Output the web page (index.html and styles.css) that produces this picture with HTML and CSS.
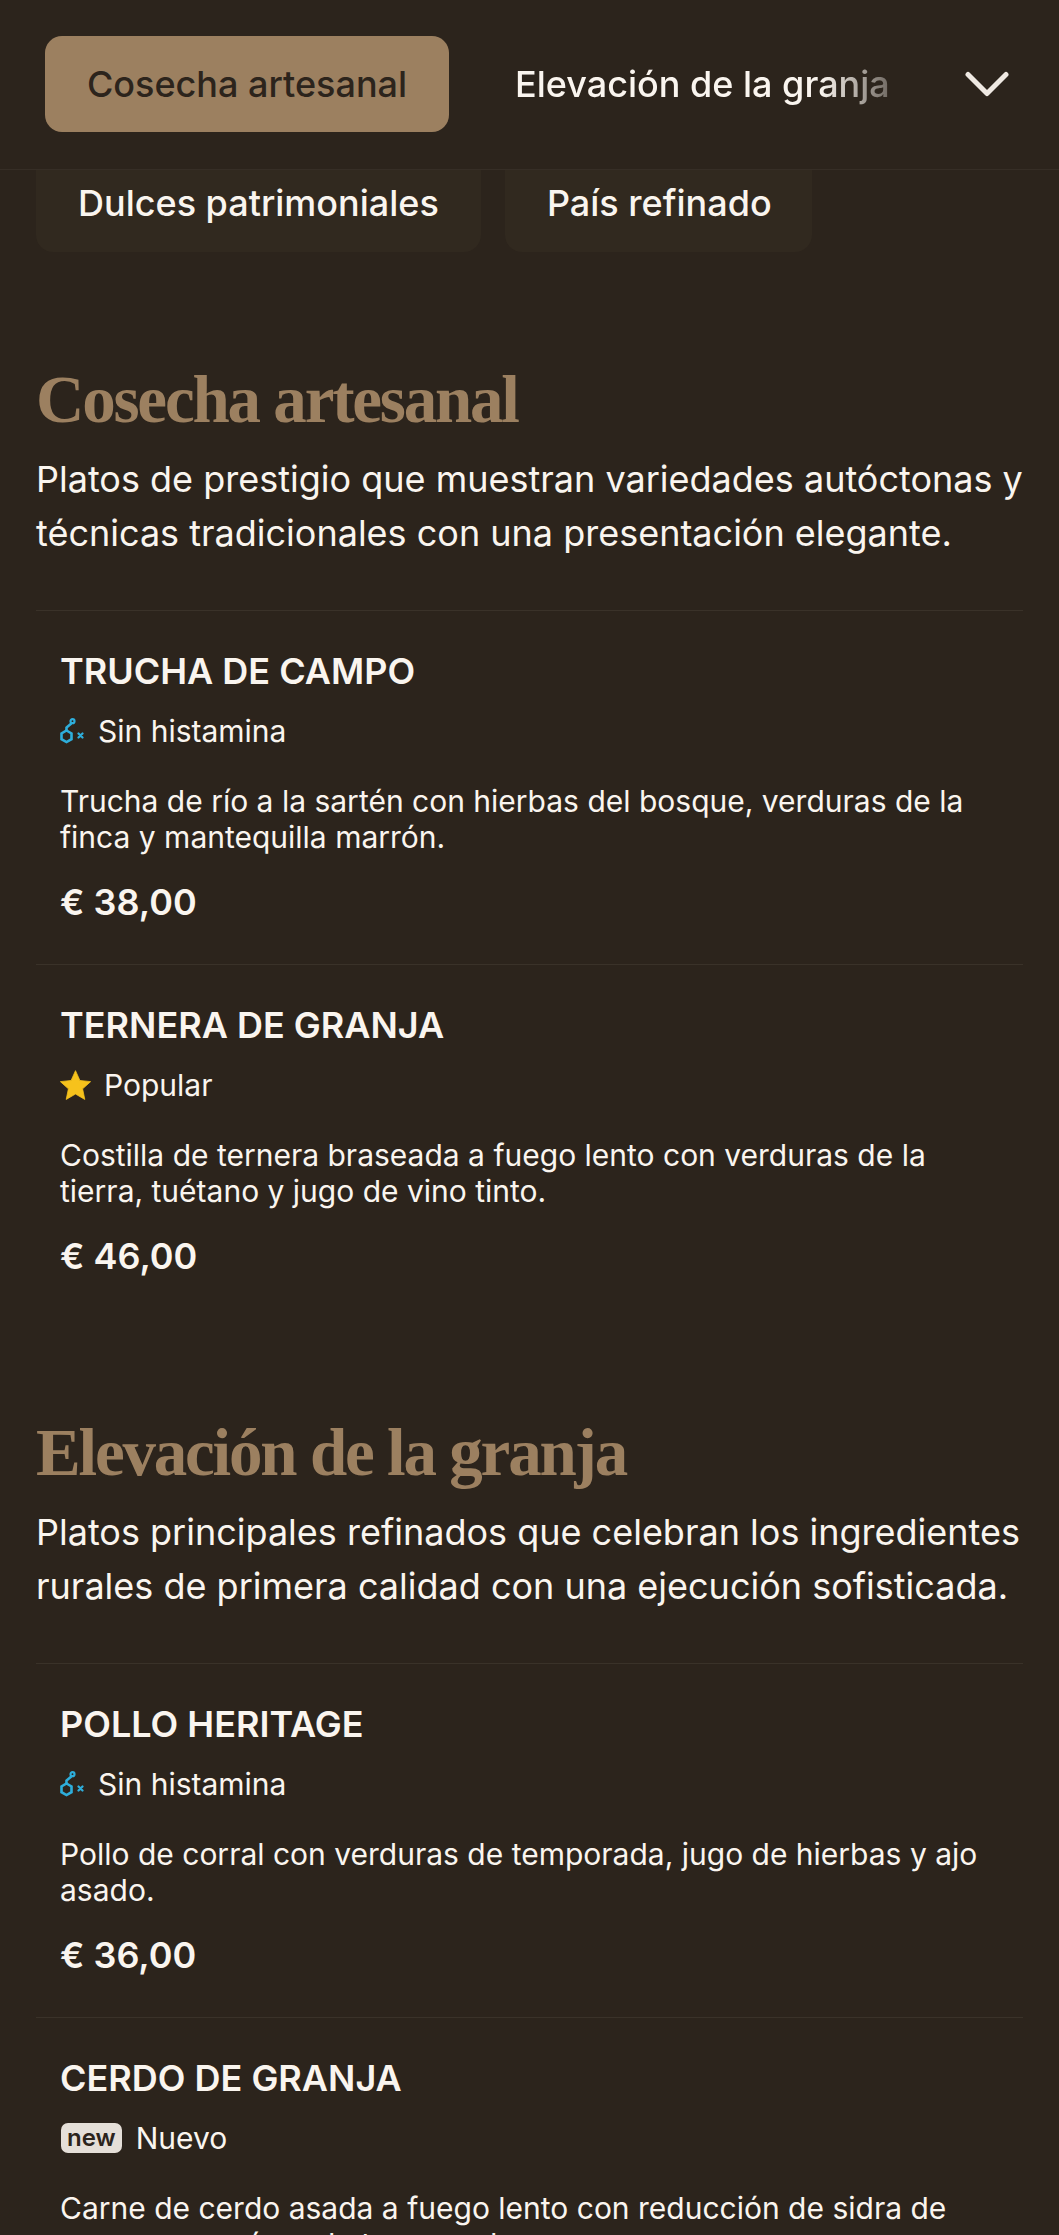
FILE: index.html
```html
<!DOCTYPE html>
<html lang="es">
<head>
<meta charset="utf-8">
<title>Menú</title>
<link rel="stylesheet" href="styles.css">
</head>
<body>
<svg class="defs" width="0" height="0" aria-hidden="true">
  <symbol id="nohist" viewBox="0 0 24 26">
    <g fill="none" stroke="currentColor" stroke-width="2.600" stroke-linecap="round">
      <path d="M6.500 12.500l5 2.900v5.800l-5 2.900-5-2.900v-5.800z"/>
      <path d="M6.500 12.500V9.500l4.500-3.800"/>
      <circle cx="12.500" cy="3.200" r="2" stroke-width="2.200"/>
      <path d="M18.500 15.500l4 4m0-4l-4 4" stroke-width="2.200"/>
    </g>
  </symbol>
</svg>
<header class="topbar">
  <button class="tab active">Cosecha artesanal</button>
  <div class="scroller"><span class="tab-plain">Elevación de la granja</span></div>
  <svg class="chevron" viewBox="0 0 44 26"><path d="M3 3.500l19 19 19-19" fill="none" stroke="currentColor" stroke-width="5" stroke-linecap="round" stroke-linejoin="round"/></svg>
</header>
<nav class="subrow">
  <span class="pill">Dulces patrimoniales</span>
  <span class="pill">País refinado</span>
</nav>
<main>
  <section class="section">
    <h2>Cosecha artesanal</h2>
    <p class="lead">Platos de prestigio que muestran variedades autóctonas y técnicas tradicionales con una presentación elegante.</p>
    <article class="item">
      <h3>TRUCHA DE CAMPO</h3>
      <div class="tag"><svg class="ic-hist"><use href="#nohist"/></svg>Sin histamina</div>
      <p class="desc">Trucha de río a la sartén con hierbas del bosque, verduras de la finca y mantequilla marrón.</p>
      <div class="price">€ 38,00</div>
    </article>
    <article class="item">
      <h3>TERNERA DE GRANJA</h3>
      <div class="tag"><svg class="ic-star" viewBox="0 0 24 24"><path d="M12 .500l3.400 7.600 8.300.900-6.200 5.600 1.700 8.200-7.200-4.200-7.200 4.200 1.700-8.200L.300 9l8.300-.900z" fill="currentColor" stroke="currentColor" stroke-width=".6" stroke-linejoin="round"/></svg>Popular</div>
      <p class="desc">Costilla de ternera braseada a fuego lento con verduras de la tierra, tuétano y jugo de vino tinto.</p>
      <div class="price">€ 46,00</div>
    </article>
  </section>
  <section class="section">
    <h2>Elevación de la granja</h2>
    <p class="lead">Platos principales refinados que celebran los ingredientes rurales de primera calidad con una ejecución sofisticada.</p>
    <article class="item">
      <h3>POLLO HERITAGE</h3>
      <div class="tag"><svg class="ic-hist"><use href="#nohist"/></svg>Sin histamina</div>
      <p class="desc">Pollo de corral con verduras de temporada, jugo de hierbas y ajo asado.</p>
      <div class="price">€ 36,00</div>
    </article>
    <article class="item">
      <h3>CERDO DE GRANJA</h3>
      <div class="tag"><span class="badge">new</span>Nuevo</div>
      <p class="desc">Carne de cerdo asada a fuego lento con reducción de sidra de manzana y raíces de temporada.</p>
      <div class="price">€ 39,00</div>
    </article>
  </section>
</main>
</body>
</html>
```

FILE: styles.css
```css
* { box-sizing: border-box; }
html, body { margin: 0; padding: 0; }
body {
  height: 2235px;
  overflow: hidden;
  background: #2c241c;
  color: #faf5ef;
  font-family: Inter, "Liberation Sans", sans-serif;
}
.defs { position: absolute; }
.topbar {
  height: 170px;
  display: flex;
  align-items: center;
  padding: 0 0 2px 45px;
  border-bottom: 1px solid #362e26;
}
.tab {
  width: 404px;
  height: 96px;
  flex: none;
  border: 0;
  border-radius: 17px;
  background: #9c8060;
  color: #2c241c;
  font: 500 36px Inter, sans-serif;
}
.scroller {
  width: 373px;
  flex: none;
  margin-left: 66px;
  overflow: hidden;
  white-space: nowrap;
  font-size: 36px;
  font-weight: 500;
  -webkit-mask-image: linear-gradient(to right, #000 82%, rgba(0,0,0,.35) 100%);
  mask-image: linear-gradient(to right, #000 82%, rgba(0,0,0,.35) 100%);
}
.chevron { width: 44px; height: 26px; flex: none; margin-left: 77px; color: #efe9e2; }
.subrow {
  height: 82px;
  display: flex;
  align-items: flex-end;
  gap: 24px;
  padding: 0 36px;
  overflow: hidden;
}
.pill {
  height: 110px;
  flex: none;
  display: flex;
  align-items: center;
  padding: 11px 42px 0;
  background: #31291f;
  border-radius: 17px;
  font-size: 36px;
  font-weight: 500;
}
.pill:last-child { padding-right: 40px; }
.section { padding: 0 36px; margin-bottom: 94px; }
.section:first-child { margin-top: 107px; }
h2 {
  margin: 0;
  font: 700 67px/80px "Liberation Serif", serif;
  color: #9c8060;
  letter-spacing: -2.200px;
}
.lead {
  margin: 13px 0 0;
  font-size: 36px;
  line-height: 54px;
  padding-bottom: 50px;
  border-bottom: 1px solid #3a3229;
}
.item {
  padding: 39px 24px 40px;
  border-bottom: 1px solid #3a3229;
}
.item:last-child { border-bottom: 0; }
h3 { margin: 0; font-size: 36px; line-height: 42px; font-weight: 600; }
.tag {
  display: flex;
  align-items: center;
  margin-top: 18px;
  font-size: 30px;
  line-height: 42px;
}
.ic-hist { width: 24px; height: 26px; color: #2eaedb; margin-right: 14px; }
.ic-star { width: 31px; height: 31px; color: #f6c21c; margin-right: 13px; }
.badge {
  background: #e5dfd8;
  color: #2c241c;
  font-weight: 600;
  font-size: 24px;
  line-height: 29px;
  padding: 0 6px 1px;
  border-radius: 7px;
  margin: 0 14px 0 1px;
}
.desc { margin: 31px 0 0; font-size: 30px; line-height: 36px; }
.price { margin-top: 25px; font-size: 36px; line-height: 44px; font-weight: 600; }
```
